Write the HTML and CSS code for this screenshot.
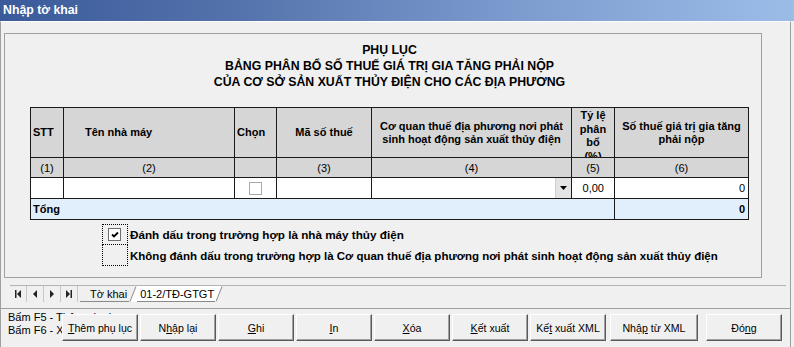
FILE: index.html
```html
<!DOCTYPE html>
<html lang="vi">
<head>
<meta charset="utf-8">
<title>Nhập tờ khai</title>
<link rel="stylesheet" href="styles.css">
</head>
<body>
<div class="titlebar">Nhập tờ khai</div>
<div class="window">
  <div class="top">
    <div class="sheet">
      <div class="heading">PHỤ LỤC<br>BẢNG PHÂN BỔ SỐ THUẾ GIÁ TRỊ GIA TĂNG PHẢI NỘP<br>CỦA CƠ SỞ SẢN XUẤT THỦY ĐIỆN CHO CÁC ĐỊA PHƯƠNG</div>
      <table class="grid">
        <colgroup>
          <col class="c-stt"><col class="c-name"><col class="c-chon"><col class="c-mst"><col class="c-cq"><col class="c-tl"><col class="c-st">
        </colgroup>
        <tr class="hdr">
          <th><div class="hc left">STT</div></th>
          <th><div class="hc name">Tên nhà máy</div></th>
          <th><div class="hc left">Chọn</div></th>
          <th><div class="hc">Mã số thuế</div></th>
          <th><div class="hc">Cơ quan thuế địa phương nơi phát<br>sinh hoạt động sản xuất thủy điện</div></th>
          <th><div class="hc over">Tỷ lệ<br>phân<br>bổ<br>(%)</div></th>
          <th><div class="hc">Số thuế giá trị gia tăng<br>phải nộp</div></th>
        </tr>
        <tr class="num">
          <td>(1)</td><td>(2)</td><td></td><td>(3)</td><td>(4)</td><td>(5)</td><td>(6)</td>
        </tr>
        <tr class="data">
          <td></td>
          <td></td>
          <td class="chk"><span class="box"></span></td>
          <td></td>
          <td><div class="combo"><span class="drop"><svg width="7" height="4" viewBox="0 0 7 4"><path d="M0 0H7L3.5 4Z" fill="#000"/></svg></span></div></td>
          <td class="r pct">0,00</td>
          <td class="r">0</td>
        </tr>
        <tr class="total">
          <td colspan="6" class="lbl">Tổng</td>
          <td class="r">0</td>
        </tr>
      </table>
      <div class="legend">
        <div class="lg-row">
          <span class="lg-mark"><span class="cb"><svg width="10" height="10" viewBox="0 0 10 10"><path d="M2 4.5L4 6.5L8 2.5" fill="none" stroke="#000" stroke-width="1.8"/></svg></span></span>
          <span class="lg-text">Đánh dấu trong trường hợp là nhà máy thủy điện</span>
        </div>
        <div class="lg-row">
          <span class="lg-mark second"></span>
          <span class="lg-text long">Không đánh dấu trong trường hợp là Cơ quan thuế địa phương nơi phát sinh hoạt động sản xuất thủy điện</span>
        </div>
      </div>
    </div>
  </div>
  <div class="tabstrip">
    <div class="nav">
      <span class="navbtn"><svg width="6" height="8" viewBox="0 0 6 8"><rect x="0" y="0" width="1.5" height="8" fill="#222"/><path d="M6 0V8L2 4Z" fill="#222"/></svg></span>
      <span class="navbtn"><svg width="4" height="8" viewBox="0 0 4 8"><path d="M4 0V8L0 4Z" fill="#222"/></svg></span>
      <span class="navbtn"><svg width="4" height="8" viewBox="0 0 4 8"><path d="M0 0V8L4 4Z" fill="#222"/></svg></span>
      <span class="navbtn"><svg width="6" height="8" viewBox="0 0 6 8"><path d="M0 0V8L4 4Z" fill="#222"/><rect x="4.5" y="0" width="1.5" height="8" fill="#222"/></svg></span>
    </div>
    <span class="tab">Tờ khai</span>
    <svg class="slant" width="8" height="16" viewBox="0 0 8 16"><path d="M1 16L7 0H8V16Z" fill="#fff"/><path d="M1 15.5L7 0.5" stroke="#8a8a8a" fill="none"/></svg>
    <span class="tab active">01-2/TĐ-GTGT</span>
    <svg class="slant" width="8" height="16" viewBox="0 0 8 16"><path d="M0 0H7L1 16H0Z" fill="#fff"/><path d="M1 15.5L7 0.5" stroke="#8a8a8a" fill="none"/></svg>
    <div class="rest"></div>
  </div>
  <div class="footer">
    <div class="hints">Bấm F5 - Thêm phụ lục<br>Bấm F6 - Xóa phụ lục</div>
    <div class="buttons">
      <button class="btn"><u>T</u>hêm phụ lục</button>
      <button class="btn">N<u>h</u>ập lại</button>
      <button class="btn"><u>G</u>hi</button>
      <button class="btn"><u>I</u>n</button>
      <button class="btn"><u>X</u>óa</button>
      <button class="btn"><u>K</u>ết xuất</button>
      <button class="btn">Kế<u>t</u> xuất XML</button>
      <button class="btn wide">Nhậ<u>p</u> từ XML</button>
      <button class="btn close">Đó<u>n</u>g</button>
    </div>
  </div>
</div>
</body>
</html>
```
FILE: styles.css
```css
* { box-sizing: border-box; }
html, body { margin: 0; padding: 0; }
body {
  width: 794px; height: 347px; overflow: hidden;
  background: #f0f0f0;
  font-family: "Liberation Sans", Arial, sans-serif;
  font-size: 11px; color: #000;
}
.titlebar {
  height: 21px;
  background: linear-gradient(90deg, #3a5a9a 0%, #5473ac 30%, #7c9ccf 65%, #9cbce8 100%);
  color: #fff; font-weight: bold; font-size: 12.3px; line-height: 21px;
  padding-left: 3px; white-space: nowrap;
}
.window {
  width: 791px; height: 326px;
  border-left: 1px solid #a0a0a0; border-right: 1px solid #a0a0a0; border-top: 1px solid #fff;
  display: flex; flex-direction: column;
}
.top { height: 263px; padding: 11px 0 0 3px; display: flex; align-items: flex-start; }
.sheet { width: 758px; height: 245px; border: 1px solid #a0a0a0; background: #f0f0f0; }
.heading {
  margin-left: 25px; width: 719px; padding-top: 8px;
  text-align: center; font-weight: bold; font-size: 12.3px; line-height: 16px; white-space: nowrap;
}
.grid { border-collapse: collapse; table-layout: fixed; width: 719px; margin: 17px 0 0 25px; }
.grid th, .grid td { border: 1px solid #1a1a1a; padding: 0; overflow: hidden; white-space: nowrap; }
.c-stt { width: 33px; } .c-name { width: 171px; } .c-chon { width: 42px; } .c-mst { width: 95px; }
.c-cq { width: 200px; } .c-tl { width: 43px; } .c-st { width: 134px; }
.hdr th { background: #d6d6d6; height: 50px; font-weight: bold; }
.hc {
  height: 49px; overflow: hidden; display: flex; align-items: center; justify-content: center;
  text-align: center; line-height: 13px;
}
.hc.left { justify-content: flex-start; padding-left: 2px; }
.hc.name { justify-content: flex-start; padding-left: 21px; }
.hc.over { align-items: flex-start; padding-top: 1px; line-height: 13.5px; }
.num td { background: #d6d6d6; height: 20px; text-align: center; }
.data td { background: #fff; height: 21px; }
.chk { text-align: center; }
.box { display: inline-block; width: 13px; height: 13px; border: 1px solid #a8a8a8; background: #fff; vertical-align: middle; }
.combo { display: flex; justify-content: flex-end; height: 20px; }
.drop { width: 16px; height: 20px; background: #e4e4e4; border-left: 1px solid #cfcfcf; display: flex; align-items: center; justify-content: center; }
.r { text-align: right; padding-right: 3px !important; }
.pct { padding-right: 10px !important; }
.total td { background: #e0effb; height: 21px; font-weight: bold; }
.total .lbl { padding-left: 2px; }
.legend { margin: 4px 0 0 97px; }
.lg-row { display: flex; align-items: center; }
.lg-mark { width: 26px; height: 21px; border: 1px dotted #000; display: flex; align-items: center; justify-content: center; }
.lg-mark.second { border-top: none; height: 21px; }
.cb { width: 13px; height: 13px; border: 1px solid #6e6e6e; background: #fff; display: flex; align-items: center; justify-content: center; margin-left: -1px; }
.lg-text { font-weight: bold; font-size: 11.7px; margin-left: 2px; white-space: nowrap; }
.lg-text.long { font-size: 11.5px; }
.tabstrip { height: 17px; margin: 0 4px 0 9px; border-top: 1px solid #b4b4b4; display: flex; align-items: stretch; }
.nav { display: flex; width: 70px; }
.navbtn { width: 17px; display: flex; align-items: center; justify-content: center; border-right: 1px solid #c8c8c8; }
.tab { display: flex; align-items: center; padding: 0 2px 0 10px; border-bottom: 1px solid #8a8a8a; font-size: 11px; }
.tab.active { background: #fff; padding: 0 1px 0 3px; }
.slant { display: block; }
.rest { flex: 1; }
.footer { margin-top: 6px; border-top: 1px solid #a0a0a0; flex: 1; position: relative; }
.hints { padding: 2px 0 0 7px; line-height: 13px; font-size: 11px; white-space: nowrap; }
.buttons { position: absolute; left: 61px; top: 5px; display: flex; gap: 2px; }
.btn {
  width: 76px; height: 27px; padding: 0; margin: 0;
  font-family: "Liberation Sans", Arial, sans-serif; font-size: 10.6px; color: #000;
  background: #f0f0f0;
  border: 1px solid; border-color: #fff #5a5a5a #5a5a5a #fff;
  box-shadow: inset -1px -1px 0 #a0a0a0;
}
.btn.wide { width: 88px; margin-left: 2px; }
.btn.close { margin-left: 6px; }
```
